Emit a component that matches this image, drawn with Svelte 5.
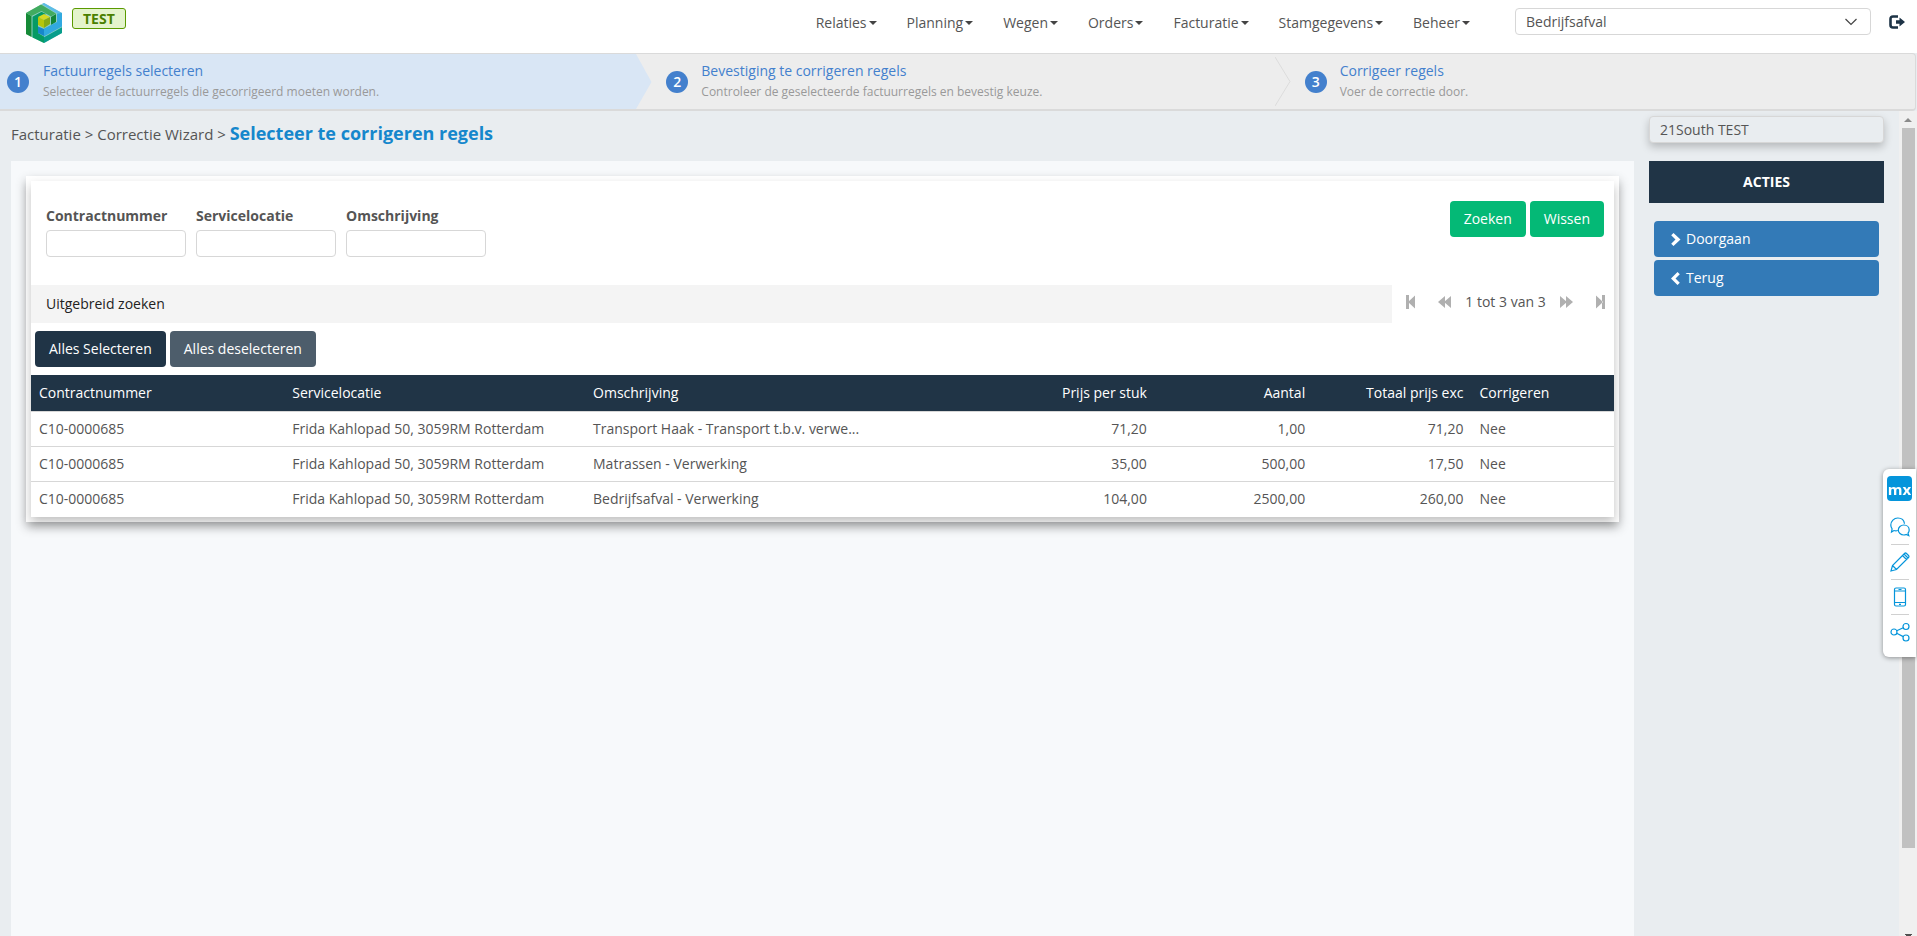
<script>
  const menu = ['Relaties', 'Planning', 'Wegen', 'Orders', 'Facturatie', 'Stamgegevens', 'Beheer'];

  const steps = [
    { title: 'Factuurregels selecteren', text: 'Selecteer de factuurregels die gecorrigeerd moeten worden.' },
    { title: 'Bevestiging te corrigeren regels', text: 'Controleer de geselecteerde factuurregels en bevestig keuze.' },
    { title: 'Corrigeer regels', text: 'Voer de correctie door.' }
  ];

  const filters = ['Contractnummer', 'Servicelocatie', 'Omschrijving'];

  const columns = [
    { label: 'Contractnummer', width: 16 },
    { label: 'Servicelocatie', width: 19 },
    { label: 'Omschrijving', width: 22 },
    { label: 'Prijs per stuk', width: 14, numeric: true },
    { label: 'Aantal', width: 10, numeric: true },
    { label: 'Totaal prijs exc', width: 10, numeric: true },
    { label: 'Corrigeren', width: 9 }
  ];

  const address = 'Frida Kahlopad 50, 3059RM Rotterdam';
  const rows = [
    ['C10-0000685', address, 'Transport Haak - Transport t.b.v. verwe...', '71,20', '1,00', '71,20', 'Nee'],
    ['C10-0000685', address, 'Matrassen - Verwerking', '35,00', '500,00', '17,50', 'Nee'],
    ['C10-0000685', address, 'Bedrijfsafval - Verwerking', '104,00', '2500,00', '260,00', 'Nee']
  ];
</script>

<div class="page">
  <header>
    <a class="logo" href="#home" aria-label="Home">
      <svg width="36" height="40" viewBox="0 0 36 40">
        <polygon points="18,0 36,10 36,30 18,40 0,31 0,10" fill="#8fd0c4" />
        <polygon points="0,10 5.500,13 5.500,34 0,31" fill="#168a37" />
        <polygon points="0,10 15,1.500 30,10.500 25,13.500 15.500,8 5.500,13" fill="#41ab5f" />
        <polygon points="16,1 18,0 36,10 30.500,10.300" fill="#5cbce9" />
        <polygon points="30,11 30,19 25,22 25,14" fill="#128538" />
        <polygon points="6.500,13.800 15.500,8.800 20,11 12,15.500 12,30 18,33.500 18,40 6.500,34.500" fill="#069a64" />
        <polygon points="31,10.500 36,10 36,20.500 18,31 18,25.500 31,19" fill="#31a9e0" />
        <polygon points="12,23.500 18,26 18,33 12,30" fill="#1787cb" />
        <polygon points="18,27 36,17 36,23.500 18,33.500" fill="#31a9e0" />
        <polygon points="18,34.300 36,24.300 36,30 18,40" fill="#079d8b" />
        <polygon points="12,14 18,11 24,14 18,17" fill="#d3d923" />
        <polygon points="12,14 18,17 18,25 12,22" fill="#b5c60c" />
        <polygon points="24,14 24,21 18,25 18,17" fill="#86ab16" />
      </svg>
    </a>
    <span class="env">TEST</span>
    <nav>
      {#each menu as item}
        <button class="menu-item">{item}<i class="caret"></i></button>
      {/each}
    </nav>
    <div class="select-wrap">
      <select aria-label="Afvalstroom">
        <option>Bedrijfsafval</option>
      </select>
      <svg width="12" height="8" viewBox="0 0 12 8" fill="none" stroke="#444" stroke-width="1.2"><path d="M.5 1 6 6.500 11.500 1" /></svg>
    </div>
    <button class="logout" aria-label="Uitloggen">
      <svg width="16" height="14" viewBox="0 0 16 14">
        <path d="M9 1.500H4Q1.500 1.500 1.500 4v6q0 2.500 2.500 2.500h5" fill="none" stroke="#1d3346" stroke-width="2.600" />
        <path d="M7 5.300h3.500V2.500L16 7l-5.500 4.500V8.700H7z" fill="#1d3346" />
      </svg>
    </button>
  </header>

  <ol class="wizard">
    {#each steps as step, i}
      <li class:active={i === 0}>
        <span class="number">{i + 1}</span>
        <div>
          <a href="#stap-{i + 1}">{step.title}</a>
          <p>{step.text}</p>
        </div>
        {#if i < 2}
          <svg class="arrow" width="18" height="55" viewBox="0 0 18 55">
            {#if i === 0}
              <path d="M0 0h2l16 0v55H0z" fill="#ededed" />
              <path d="M0 0 15.500 28 0 55z" fill="#d9e6f5" />
            {:else}
              <path d="M0 3 15 27.500 0 52" fill="none" stroke="#dcdcdc" />
            {/if}
          </svg>
        {/if}
      </li>
    {/each}
  </ol>

  <div class="body">
    <main>
      <div class="crumbs">
        Facturatie &gt; Correctie Wizard &gt; <h1>Selecteer te corrigeren regels</h1>
      </div>
      <section class="canvas">
        <div class="card">
          <div class="grid">
            <form class="search" onsubmit={(e) => e.preventDefault()}>
              {#each filters as label, i}
                <div class="field">
                  <label for="filter-{i}">{label}</label>
                  <input id="filter-{i}" type="text" />
                </div>
              {/each}
              <div class="search-actions">
                <button class="btn green">Zoeken</button>
                <button class="btn green" type="reset">Wissen</button>
              </div>
            </form>

            <div class="toolbar">
              <button class="extended">Uitgebreid zoeken</button>
              <div class="paging">
                <button aria-label="Eerste pagina">
                  <svg width="9" height="14" viewBox="0 0 9 14"><path d="M0 0h3v14H0zM9 .5v13L2 7z" /></svg>
                </button>
                <button aria-label="Vorige pagina">
                  <svg width="13" height="12" viewBox="0 0 13 12"><path d="M7 0v12L0 6zM13 0v12L6 6z" /></svg>
                </button>
                <span>1 tot 3 van 3</span>
                <button aria-label="Volgende pagina">
                  <svg width="13" height="12" viewBox="0 0 13 12"><path d="M0 0v12l7-6zM6 0v12L13 6z" /></svg>
                </button>
                <button aria-label="Laatste pagina">
                  <svg width="9" height="14" viewBox="0 0 9 14"><path d="M6 0H9v14H6zM0 .5v13L7 7z" /></svg>
                </button>
              </div>
            </div>

            <div class="selection">
              <button class="btn navy">Alles Selecteren</button>
              <button class="btn slate">Alles deselecteren</button>
            </div>

            <table>
              <colgroup>
                {#each columns as column}
                  <col style="width: {column.width}%" />
                {/each}
              </colgroup>
              <thead>
                <tr>
                  {#each columns as column}
                    <th class:numeric={column.numeric}>{column.label}</th>
                  {/each}
                </tr>
              </thead>
              <tbody>
                {#each rows as row}
                  <tr>
                    {#each row as cell, c}
                      <td class:numeric={columns[c].numeric}>{cell}</td>
                    {/each}
                  </tr>
                {/each}
              </tbody>
            </table>
          </div>
        </div>
      </section>
    </main>

    <aside>
      <input class="company" type="text" value="21South TEST" readonly aria-label="Bedrijf" />
      <h2>ACTIES</h2>
      <div class="actions">
        <button class="btn blue">
          <svg width="10" height="13" viewBox="0 0 10 13"><path d="M2.500 0 9.500 6.500 2.500 13 .2 10.700 4.500 6.500.2 2.300z" /></svg>
          Doorgaan
        </button>
        <button class="btn blue">
          <svg width="10" height="13" viewBox="0 0 10 13"><path d="M6.500 0 0 6.500 6.500 13l2.300-2.300L4.500 6.500l4.300-4.200z" /></svg>
          Terug
        </button>
      </div>
    </aside>

    <div class="scrollbar" aria-hidden="true">
      <svg width="8" height="4" viewBox="0 0 8 4"><path d="M4 0 8 4H0z" fill="#8b8b8b" /></svg>
      <div class="thumb"></div>
      <div class="rest"></div>
      <svg class="down" width="7" height="2" viewBox="0 0 7 2"><path d="M0 0h7v1H6v1H1V1H0z" fill="#505050" /></svg>
    </div>
  </div>

  <div class="feedback">
    <button class="mx" aria-label="Mendix">mx</button>
    <button aria-label="Feedback">
      <svg width="20" height="20" viewBox="0 0 20 20">
        <path d="M4 13.500 1.500 15l.6-3.200A6.200 6.200 0 0 1 .8 8C.8 4.300 4 1 7.800 1s6.300 2.300 6.700 5.800" />
        <path d="M7.800 13.500c-1.500.5-2.600.4-3.800 0" />
        <path d="M18 16.200A5 5 0 0 0 19.200 13c0-3-2.400-5-5.400-5S8.300 10.200 8.300 13s2.500 5 5.500 5c.8 0 1.700-.2 2.400-.5l2.600 1.200z" />
      </svg>
    </button>
    <button aria-label="Bewerken">
      <svg width="20" height="20" viewBox="0 0 20 20">
        <path d="m1 19 1.500-5.500L14.500 1.500q1-1 2 0l2 2q1 1 0 2L6.500 17.500zM2.500 13.500l4 4M12.500 3.500l4 4M14 2l4 4" />
      </svg>
    </button>
    <button aria-label="Mobiele weergave">
      <svg width="20" height="20" viewBox="0 0 20 20">
        <rect x="4.500" y="1" width="11" height="18" rx="1.500" />
        <path d="M4.500 4h11M4.500 15.500h11M8.500 2.500h3M9 17.300h2" />
      </svg>
    </button>
    <button aria-label="Delen">
      <svg width="20" height="20" viewBox="0 0 20 20">
        <circle cx="4" cy="10" r="3" /><circle cx="16" cy="4.500" r="3" /><circle cx="16" cy="16" r="3" />
        <path d="m6.700 8.700 6.600-3M6.700 11.300l6.600 3.300" />
      </svg>
    </button>
  </div>
</div>

<style>
  :global(body) {
    background: #e9edf0;
    color: #555;
    font: 14px/20px 'Open Sans', sans-serif;
  }
  :global(*) {
    box-sizing: border-box;
  }
  button, input, select {
    font: inherit;
    color: inherit;
  }
  button {
    margin: 0;
    padding: 0;
    border: 0;
    background: none;
    cursor: pointer;
  }
  a {
    text-decoration: none;
  }
  svg {
    display: block;
    flex: none;
  }
  .page {
    display: flex;
    flex-direction: column;
    min-height: 100vh;
  }

  header {
    display: flex;
    align-items: flex-start;
    height: 53px;
    padding: 3px 12px 0 26px;
    background: #fff;
  }
  .env {
    margin: 5px 0 0 10px;
    padding: 0 10px;
    border: 1px solid #5a9a00;
    border-radius: 3px;
    background: #e4f4cc;
    color: #4a8000;
    font-weight: 700;
    line-height: 19px;
  }
  nav {
    display: flex;
    flex: 1;
    justify-content: flex-end;
    padding: 10px 30px 0 0;
  }
  .menu-item {
    display: flex;
    align-items: center;
    padding: 0 15px;
    line-height: 20px;
  }
  .caret {
    margin-left: 2px;
    border: 4px solid transparent;
    border-top-color: #444;
    border-bottom: 0;
  }
  .select-wrap {
    display: flex;
    align-items: center;
    width: 356px;
    margin: 5px 18px 0 0;
    border: 1px solid #d7d7d7;
    border-radius: 4px;
  }
  select {
    flex: 1;
    height: 25px;
    margin-right: -25px;
    padding: 0 10px;
    border: 0;
    background: none;
    appearance: none;
  }
  .select-wrap svg {
    margin-right: 13px;
  }
  .logout {
    margin-top: 12px;
  }

  .wizard {
    display: grid;
    grid-template-columns: repeat(3, 1fr);
    margin: 0 1px 0 0;
    padding: 0;
    list-style: none;
    background: #ededed;
    border: 1px solid #dadada;
    border-width: 1px 1px 2px 0;
    border-radius: 0 4px 4px 0;
  }
  .wizard li {
    position: relative;
    display: flex;
    align-items: center;
    gap: 13px;
    height: 55px;
    padding-left: 28px;
  }
  .wizard li.active {
    padding-left: 7px;
    gap: 14px;
    background: #d9e6f5;
  }
  .arrow {
    position: absolute;
    right: -16px;
    top: 0;
  }
  .number {
    width: 22px;
    height: 22px;
    border-radius: 50%;
    background: #4380cd;
    color: #fff;
    font-weight: 600;
    line-height: 22px;
    text-align: center;
  }
  .wizard a {
    color: #4380cd;
    line-height: 20px;
  }
  .wizard p {
    margin: 0;
    color: #999;
    font-size: 12px;
    line-height: 21px;
  }

  .body {
    display: flex;
    flex: 1;
  }
  main {
    display: flex;
    flex: 1;
    flex-direction: column;
    padding-left: 11px;
  }
  .crumbs {
    height: 50px;
    padding-top: 9px;
    font-size: 15px;
    line-height: 26px;
  }
  h1 {
    display: inline;
    margin: 0;
    color: #1587cc;
    font-size: 18px;
    font-weight: 700;
  }
  .canvas {
    flex: 1;
    padding: 15px;
    background: #f7f9fb;
  }
  .card {
    padding: 5px;
    background: #fff;
    box-shadow: 0 5px 10px rgba(0, 0, 0, 0.3);
  }
  .grid {
    padding-bottom: 1px;
    background: #fff;
    box-shadow: 0 5px 10px rgba(0, 0, 0, 0.25);
  }
  .search {
    display: flex;
    gap: 10px;
    height: 104px;
    padding: 20px 10px 0 15px;
  }
  .field {
    width: 140px;
    padding-top: 5px;
  }
  .field label {
    display: block;
    font-weight: 700;
    line-height: 20px;
  }
  .field input {
    width: 100%;
    height: 27px;
    margin-top: 4px;
    padding: 0 9px;
    border: 1px solid #d7d7d7;
    border-radius: 4px;
  }
  .search-actions {
    display: flex;
    gap: 4px;
    margin-left: auto;
  }
  .btn {
    height: 36px;
    padding: 0 14px;
    border-radius: 4px;
    color: #fff;
  }
  .green {
    background: #04b976;
  }
  .navy {
    background: #203446;
  }
  .slate {
    background: #4d5d6b;
  }
  .blue {
    display: flex;
    align-items: center;
    gap: 5px;
    padding: 0 17px;
    background: #337ab7;
  }
  .blue svg {
    fill: #fff;
  }

  .toolbar {
    display: flex;
    height: 38px;
  }
  .extended {
    flex: 1;
    padding: 0 15px;
    background: #f4f4f4;
    color: #222;
    text-align: left;
  }
  .paging {
    display: flex;
    align-items: center;
    justify-content: space-between;
    width: 222px;
    padding: 0 9px 4px 14px;
  }
  .paging span {
    margin: 0 -8px;
  }
  .paging svg {
    fill: #b0b0b0;
  }
  .selection {
    display: flex;
    gap: 4px;
    padding: 8px 4px;
  }

  table {
    width: 100%;
    border-collapse: collapse;
    table-layout: fixed;
  }
  th, td {
    padding: 7px 8px;
    text-align: left;
    white-space: nowrap;
  }
  th {
    padding: 8px;
    background: #203446;
    color: #fff;
    font-weight: 400;
  }
  td {
    border-top: 1px solid #d7d7d7;
  }
  .numeric {
    text-align: right;
  }

  aside {
    width: 265px;
    padding: 5px 15px 0;
  }
  .company {
    display: block;
    width: 100%;
    height: 27px;
    padding: 0 10px;
    border: 1px solid #d7d7d7;
    border-radius: 4px;
    background: #e9edf0;
    box-shadow: 0 4px 8px rgba(0, 0, 0, 0.22);
  }
  h2 {
    margin: 18px 0;
    background: #203446;
    color: #fff;
    font-size: 14px;
    font-weight: 700;
    line-height: 42px;
    text-align: center;
  }
  .actions {
    display: flex;
    flex-direction: column;
    gap: 3px;
    padding: 0 5px;
  }

  .scrollbar {
    display: flex;
    flex-direction: column;
    align-items: center;
    width: 18px;
    padding-top: 7px;
    background: #f0f0f0;
  }
  .thumb {
    flex: 720;
    width: 13px;
    margin-top: 6px;
    background: #c1c1c1;
  }
  .rest {
    flex: 86;
  }

  .feedback {
    position: fixed;
    top: 469px;
    right: 1px;
    display: flex;
    flex-direction: column;
    align-items: center;
    width: 33px;
    padding: 7px 0 8px;
    border-radius: 6px 0 0 6px;
    background: #fff;
    box-shadow: 0 1px 5px rgba(0, 0, 0, 0.4);
  }
  .feedback button {
    display: flex;
    align-items: center;
    justify-content: center;
    width: 18px;
    height: 35px;
    border-top: 1px solid #d0d0d0;
  }
  .feedback .mx {
    width: 25px;
    height: 25px;
    border: 0;
    border-radius: 4px;
    background: #0595db;
    color: #fff;
    font-size: 15px;
    font-weight: 700;
    line-height: 20px;
  }
  .feedback .mx + button {
    margin-top: 8px;
    border-color: transparent;
  }
  .feedback svg {
    fill: none;
    stroke: #0595db;
    stroke-width: 1.2;
  }
</style>
